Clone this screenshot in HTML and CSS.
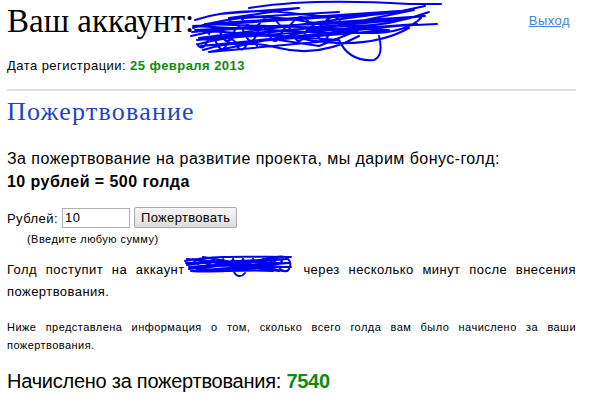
FILE: index.html
```html
<!DOCTYPE html>
<html lang="ru">
<head>
  <meta charset="UTF-8">
  <title>Ваш аккаунт</title>
  <link rel="stylesheet" href="styles.css">
</head>
<body>

<div class="page">

  <!-- HEADER -->
  <div class="header">
    <h1>Ваш аккаунт:</h1>
    <svg class="scribble-big" width="256" height="64" viewBox="0 0 256 64">
      <path d="M4 28 Q60 10 120 22 T240 12 M2 36 Q70 20 140 30 T232 18 M6 20 Q50 6 110 14 T236 6 M10 44 Q60 30 120 40 T220 28 M14 50 Q50 38 90 48 T170 36 M3 32 L236 16 L8 40 L228 24 L12 46 L200 30 L16 24 L225 10 L20 52 L150 40 L6 30 L210 20 L10 38 L190 14 L4 26 L160 34 M150 40 Q160 62 185 60 Q195 56 190 36 M60 8 Q120 -2 220 4 L252 4 M120 30 L248 24 M20 34 q6 -14 12 0 q6 14 12 0 q6 -14 12 0 q6 14 12 0 q6 -14 12 0 q6 14 12 0 q6 -14 12 0 q6 14 12 0 q6 -14 12 0 q6 14 12 0 M8 44 q5 8 10 -2 q5 -10 10 2 q5 10 10 0 q5 -10 10 2 q5 8 10 -2 q5 -8 10 2 M40 22 q8 -10 16 0 q8 10 16 0 q8 -10 16 0 q8 10 16 0 q8 -10 16 0 q8 10 16 0 q8 -10 16 0 q8 10 16 0 M90 40 L130 46 L170 30 M30 14 L110 8 L40 18 L150 12" fill="none" stroke="#0000f0" stroke-width="2" stroke-linecap="round" stroke-linejoin="round"/>
    </svg>
    <a href="#" class="logout">Выход</a>
  </div>

  <p class="reg">Дата регистрации: <b class="green">25 февраля 2013</b></p>

  <hr>

  <!-- DONATION -->
  <h2>Пожертвование</h2>

  <p class="offer">За пожертвование на развитие проекта, мы дарим бонус-голд:<br>
    <b>10 рублей = 500 голда</b></p>

  <form class="donate">
    <label>Рублей: <input type="text" value="10"></label>
    <button type="button">Пожертвовать</button>
  </form>
  <div class="hint">(Введите любую сумму)</div>

  <p class="info">Голд поступит на аккаунт<span class="hidden-name"><svg width="112" height="28" viewBox="0 0 112 28">
      <path d="M2 10 C30 4 70 6 108 6 M4 14 C40 8 80 12 106 12 M6 18 C40 12 80 16 108 16 M3 12 L104 8 L6 16 L106 12 L8 20 L100 16 L4 8 L96 20 M10 8 q5 10 10 0 q5 10 10 0 q5 10 10 0 q5 10 10 0 q5 10 10 0 q5 10 10 0 q5 10 10 0 q5 10 10 0 q5 10 10 0 M8 20 C30 22 60 18 90 20 M50 18 C52 26 58 27 62 22 M94 6 C104 4 110 10 106 18 C104 22 98 20 96 16 M20 6 L100 20 M14 18 L96 6" fill="none" stroke="#0000f0" stroke-width="2" stroke-linecap="round" stroke-linejoin="round"/>
    </svg></span> через несколько минут после внесения пожертвования.</p>

  <p class="note">Ниже представлена информация о том, сколько всего голда вам было начислено за ваши пожертвования.</p>

  <div class="total">Начислено за пожертвования: <b class="green">7540</b></div>

</div>

</body>
</html>
```

FILE: styles.css
```css
body {
  margin: 0;
  font-family: "Liberation Sans", Arial, sans-serif;
  letter-spacing: 0.45px;
  color: #000;
  background: #fff;
}
.page {
  width: 569px;
  margin-left: 7px;
}
.header {
  display: flex;
  align-items: flex-start;
  height: 50px;
  position: relative;
}
h1 {
  font-family: "Liberation Serif", "Times New Roman", serif;
  font-weight: normal;
  font-size: 33px;
  letter-spacing: 0;
  margin: 3px 0 0 0;
}
.scribble-big {
  position: absolute;
  left: 182px;
  top: 0;
}
.logout {
  margin-left: auto;
  margin-top: 13px;
  margin-right: 6px;
  font-size: 13px;
  color: #3a86d6;
}
.reg {
  font-size: 13px;
  margin: 8px 0 0 0;
}
.green {
  color: #0c8a14;
}
hr {
  border: 0;
  border-top: 2px solid #e0e0e0;
  margin: 16px 0 0 0;
}
h2 {
  font-family: "Liberation Serif", "Times New Roman", serif;
  font-weight: normal;
  font-size: 26px;
  letter-spacing: 1.2px;
  color: #1e44c4;
  margin: 6px 0 0 0;
}
.offer {
  font-size: 16px;
  line-height: 23px;
  margin: 20px 0 0 0;
}
.donate {
  font-size: 13px;
  margin-top: 14px;
  display: flex;
  align-items: center;
  gap: 4px;
}
.donate input {
  width: 62px;
  height: 16px;
  padding: 1px 2px;
  font-family: "Liberation Sans", Arial, sans-serif;
  font-size: 13px;
  letter-spacing: 0.45px;
  border: 1px solid #b0b0b0;
}
.donate button {
  height: 21px;
  padding: 0 6px;
  font-family: "Liberation Sans", Arial, sans-serif;
  font-size: 13px;
  letter-spacing: 0.3px;
  background: linear-gradient(#f6f6f6, #dedede);
  border: 1px solid #a8a8a8;
  border-radius: 2px;
}
.hint {
  font-size: 11px;
  margin: 5px 0 0 20px;
}
.info {
  font-size: 13px;
  line-height: 22px;
  text-align: justify;
  margin: 14px 0 0 0;
}
.hidden-name {
  display: inline-block;
  width: 110px;
  height: 14px;
  position: relative;
  vertical-align: baseline;
}
.hidden-name svg {
  position: absolute;
  left: -2px;
  top: -9px;
}
.note {
  font-size: 11px;
  line-height: 18px;
  text-align: justify;
  margin: 15px 0 0 0;
}
.total {
  font-size: 20px;
  letter-spacing: -0.25px;
  margin-top: 16px;
}
```
